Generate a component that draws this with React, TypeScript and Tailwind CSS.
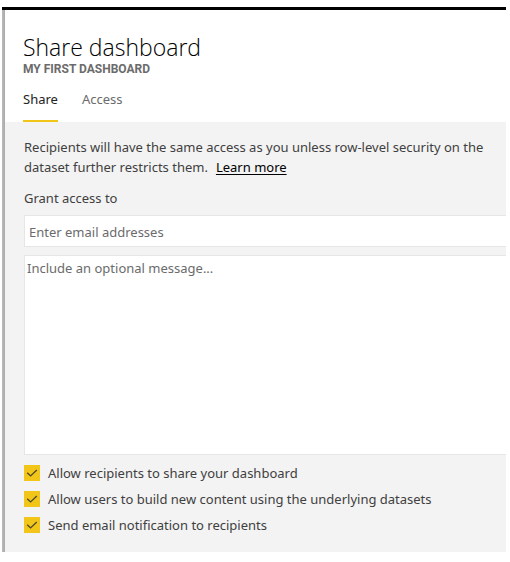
import { useState } from "react";

function CheckOption({ label }: { label: string }) {
  const [on, setOn] = useState(true);
  return (
    <label className="flex h-[26px] items-center gap-2">
      <span className="relative flex size-4">
        <input
          type="checkbox"
          checked={on}
          onChange={(e) => setOn(e.target.checked)}
          className="peer size-4 appearance-none border border-[#f2c619] bg-white checked:bg-[#f2c619]"
        />
        <svg viewBox="0 0 16 16" className="pointer-events-none absolute inset-0 hidden size-4 peer-checked:block" fill="none" stroke="#4f4a2c" strokeWidth="1.4">
          <path d="M3.2 7.7 L6.6 10.9 L12.8 4.9" />
        </svg>
      </span>
      {label}
    </label>
  );
}

export default function App() {
  return (
    <div className="bg-white pt-[7px] pr-1 pb-2.5 pl-0.5 font-['Noto_Sans','Open_Sans',sans-serif] text-[13px] leading-5 text-[#404040]">
      <main className="border-t-[3px] border-black">
        <div className="flex">
          <div className="w-[3px] shrink-0 bg-linear-to-r from-[#bcbcbc] to-[#a9a9a9]" />
          <div className="min-w-0 flex-1">
            <header className="px-[18px] pt-6">
              <h1 className="font-['Open_Sans','Noto_Sans',sans-serif] text-[23px] leading-[26px] font-light text-black">Share dashboard</h1>
              <p className="font-[Roboto,sans-serif] text-xs leading-[18px] font-bold text-[#6b6b6b]">MY FIRST DASHBOARD</p>
              <nav className="mt-2 flex gap-6">
                <a href="#share" className="border-b-2 border-[#f2c619] pt-[3px] pb-[11px] text-[#222]">Share</a>
                <a href="#access" className="pt-[3px] pb-[11px] text-[#6b6b6b]">Access</a>
              </nav>
            </header>
            <form className="bg-[#f3f3f3] pt-[15px] pb-3.5 pl-[19px]">
              <p className="pr-2">
                Recipients will have the same access as you unless row-level security on the dataset further restricts them.
                <a href="#learn" className="ml-2 text-black underline underline-offset-2">Learn more</a>
              </p>
              <label htmlFor="email" className="mt-[11px] block">Grant access to</label>
              <input id="email" placeholder="Enter email addresses" className="mt-[7px] block h-8 w-full border border-r-0 border-[#e6e6e6] bg-white px-1 pt-0.5 placeholder:text-[#6b6b6b]" />
              <textarea aria-label="Message" placeholder="Include an optional message..." className="mt-2 block h-[200px] w-full resize-none border border-r-0 border-[#e6e6e6] bg-white px-0.5 py-0.5 placeholder:text-[#6b6b6b]" />
              <div className="mt-[5px]">
                <CheckOption label="Allow recipients to share your dashboard" />
                <CheckOption label="Allow users to build new content using the underlying datasets" />
                <CheckOption label="Send email notification to recipients" />
              </div>
            </form>
          </div>
        </div>
      </main>
    </div>
  );
}
